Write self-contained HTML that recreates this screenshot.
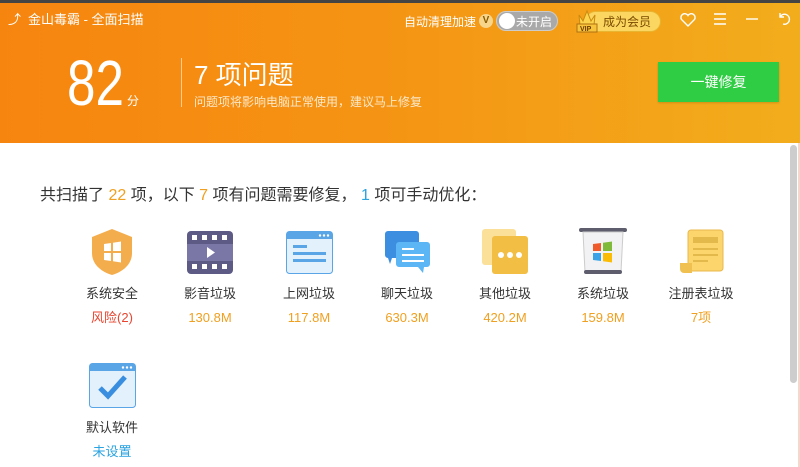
<!DOCTYPE html>
<html><head><meta charset="utf-8"><style>
*{margin:0;padding:0;box-sizing:border-box}
body{width:800px;height:467px;overflow:hidden;background:#fff;font-family:"Liberation Sans","Noto Sans CJK SC",sans-serif;position:relative}
.top{position:absolute;left:0;top:0;width:800px;height:143px;background:linear-gradient(90deg,#f6850f 0%,#f59514 50%,#f2ad1c 100%)}
.strip{position:absolute;left:0;top:0;width:800px;height:3px;background:#444}
.t{position:absolute;color:#fff;white-space:nowrap}
.item{position:absolute;width:100px;text-align:center}
.item svg{display:block;margin:0 auto}
.lbl{font-size:13px;color:#333;margin-top:8px;line-height:18px}
.val{font-size:13px;color:#f0a020;margin-top:6px;line-height:18px}
</style></head><body>
<div class="top"></div><div class="strip"></div>
<div class="t" style="left:8px;top:9px;font-size:13px;">&#x2934;&#xFE0E;</div>
<div class="t" style="left:28px;top:9px;font-size:13px">金山毒霸 - 全面扫描</div>
<div class="t" style="left:404px;top:13px;font-size:12px">自动清理加速</div>
<div style="position:absolute;left:479px;top:14px;width:14px;height:14px;border-radius:7px;background:#f7d58a;color:#8a5a00;font-size:10px;font-weight:bold;text-align:center;line-height:14px">V</div>
<div style="position:absolute;left:496px;top:11px;width:62px;height:20px;border-radius:10px;background:#a9a9a9;border:1px solid #ccc"></div>
<div style="position:absolute;left:499px;top:13px;width:16px;height:16px;border-radius:8px;background:#fff"></div>
<div class="t" style="left:516px;top:13px;font-size:12px">未开启</div>
<div style="position:absolute;left:585px;top:11px;width:76px;height:21px;border-radius:11px;background:#fbd660;border:1px solid #e8b530"></div>
<svg style="position:absolute;left:573px;top:5px" width="28" height="28"><path d="M6 10 L10 16 L14 6 L18 16 L22 10 L21 20 L7 20Z" fill="#fcd34d" stroke="#c98a10"/><rect x="4" y="19" width="20" height="8" fill="#f7c33a" stroke="#b07010"/><text x="7" y="26" font-size="7" font-weight="bold" fill="#6b3b00" font-family="Liberation Sans">VIP</text></svg>
<div class="t" style="left:603px;top:13px;font-size:12px;color:#7a4a00">成为会员</div>
<svg style="position:absolute;left:679px;top:11px" width="18" height="18"><path d="M9 15 L2.5 8.5 A3.5 3.5 0 0 1 9 4.5 A3.5 3.5 0 0 1 15.5 8.5Z" fill="none" stroke="#fff" stroke-width="1.4"/></svg>
<svg style="position:absolute;left:712px;top:11px" width="16" height="16"><path d="M2 3h12M2 8h12M2 13h12" stroke="#fff" stroke-width="1.4"/></svg>
<svg style="position:absolute;left:744px;top:11px" width="16" height="16"><path d="M2 8h12" stroke="#fff" stroke-width="1.4"/></svg>
<svg style="position:absolute;left:776px;top:10px" width="16" height="16"><path d="M4 3v4h4 M4 7 A5 5 0 1 1 7 14" fill="none" stroke="#fff" stroke-width="1.4"/></svg>
<div class="t" style="left:67px;top:48px;font-size:64px;line-height:70px;font-weight:300;transform:scaleX(.8);transform-origin:left">82</div>
<div class="t" style="left:127px;top:92px;font-size:12px">分</div>
<div style="position:absolute;left:181px;top:58px;width:1px;height:49px;background:rgba(255,255,255,.55)"></div>
<div class="t" style="left:194px;top:55px;font-size:26px">7 项问题</div>
<div class="t" style="left:194px;top:93px;font-size:12px;color:#fde8c8">问题项将影响电脑正常使用，建议马上修复</div>
<div style="position:absolute;left:658px;top:62px;width:121px;height:40px;background:#2fcd44;color:#fff;font-size:14px;text-align:center;line-height:40px;box-shadow:0 1px 2px rgba(0,0,0,.15)">一键修复</div>
<div style="position:absolute;left:790px;top:145px;width:7px;height:238px;border-radius:4px;background:#cdcdcd"></div>
<div style="position:absolute;left:798px;top:143px;width:2px;height:324px;background:#f3d8cc"></div>
<div style="position:absolute;left:40px;top:181px;font-size:16px;color:#333;white-space:nowrap">共扫描了 <span style="color:#f0a020">22</span> 项，以下 <span style="color:#f0a020">7</span> 项有问题需要修复， <span style="color:#2aa3e0">1</span> 项可手动优化：</div>

<div class="item" style="left:62px;top:227px">
<svg width="50" height="50"><path d="M25 2 L45 10 V26 C45 38 35 45 25 48 C15 45 5 38 5 26 V10Z" fill="#f4ad4c"/><path d="M17 17 L24 16 V24 H17Z M26 15.7 L34 14.5 V24 H26Z M17 26 H24 V34 L17 33Z M26 26 H34 V35.5 L26 34.3Z" fill="#fff"/></svg>
<div class="lbl">系统安全</div><div class="val" style="color:#e8452f">风险(2)</div></div>

<div class="item" style="left:160px;top:227px">
<svg width="50" height="50"><rect x="2" y="4" width="46" height="43" rx="4" fill="#5d5a85"/><rect x="2" y="17" width="46" height="17" fill="#7a77a6"/><g fill="#fff"><rect x="7" y="8" width="5" height="5"/><rect x="17" y="8" width="5" height="5"/><rect x="27" y="8" width="5" height="5"/><rect x="37" y="8" width="5" height="5"/><rect x="7" y="37" width="5" height="5"/><rect x="17" y="37" width="5" height="5"/><rect x="27" y="37" width="5" height="5"/><rect x="37" y="37" width="5" height="5"/><path d="M22 20 L30 25.5 L22 31Z"/></g></svg>
<div class="lbl">影音垃圾</div><div class="val">130.8M</div></div>

<div class="item" style="left:259px;top:227px">
<svg width="50" height="50"><rect x="2.5" y="4.5" width="46" height="42" rx="3" fill="#e3f1fd" stroke="#5aa5e6"/><rect x="3" y="5" width="45" height="7" fill="#5aa5e6"/><g fill="#fff"><circle cx="36" cy="8.5" r="1.2"/><circle cx="40" cy="8.5" r="1.2"/><circle cx="44" cy="8.5" r="1.2"/></g><g fill="#5aa5e6"><rect x="9" y="18" width="14" height="3"/><rect x="9" y="25" width="33" height="3"/><rect x="9" y="32" width="33" height="3"/></g></svg>
<div class="lbl">上网垃圾</div><div class="val">117.8M</div></div>

<div class="item" style="left:357px;top:227px">
<svg width="50" height="50"><path d="M6 4 H34 A3 3 0 0 1 37 7 V28 A3 3 0 0 1 34 31 H10 L8 37 L6 31 A3 3 0 0 1 3 28 V7 A3 3 0 0 1 6 4Z" fill="#3c8fe0"/><path d="M17 15 H45 A3 3 0 0 1 48 18 V37 A3 3 0 0 1 45 40 H42 L41 46 L36 40 H17 A3 3 0 0 1 14 37 V18 A3 3 0 0 1 17 15Z" fill="#5cb5f4"/><g fill="#fff"><rect x="20" y="21" width="12" height="2"/><rect x="20" y="27" width="22" height="2"/><rect x="20" y="33" width="22" height="2"/></g></svg>
<div class="lbl">聊天垃圾</div><div class="val">630.3M</div></div>

<div class="item" style="left:455px;top:227px">
<svg width="50" height="50"><rect x="2" y="2" width="34" height="36" rx="3" fill="#fbe09a"/><rect x="12" y="9" width="36" height="38" rx="3" fill="#f2be43"/><g fill="#fff"><circle cx="21" cy="28" r="3"/><circle cx="30" cy="28" r="3"/><circle cx="39" cy="28" r="3"/></g></svg>
<div class="lbl">其他垃圾</div><div class="val">420.2M</div></div>

<div class="item" style="left:553px;top:227px">
<svg width="50" height="50"><rect x="1" y="1" width="48" height="4" rx="2" fill="#5d5d6e"/><path d="M5 5 H45 L43 45 H7Z" fill="#f2f2f4" stroke="#ccc"/><rect x="6" y="43" width="38" height="4" rx="2" fill="#5d5d6e"/><path d="M15 17 L23 16 V24 H15Z" fill="#f05a2a"/><path d="M25 15.7 L34 14.5 V24 H25Z" fill="#7fba3a"/><path d="M15 26 H23 V34 L15 33Z" fill="#3aa3e8"/><path d="M25 26 H34 V35.5 L25 34.3Z" fill="#fbbc05"/></svg>
<div class="lbl">系统垃圾</div><div class="val">159.8M</div></div>

<div class="item" style="left:651px;top:227px">
<svg width="50" height="50"><rect x="12" y="3" width="35" height="41" rx="3" fill="#fcd56d" stroke="#e8b84a"/><path d="M4 36 H16 V46 H8 A4 4 0 0 1 4 42Z" fill="#f0c050"/><rect x="17" y="10" width="25" height="6" fill="#e2b94a"/><rect x="17" y="21" width="25" height="2" fill="#e2b94a"/><rect x="17" y="27" width="25" height="2" fill="#e2b94a"/><rect x="17" y="33" width="15" height="2" fill="#e2b94a"/></svg>
<div class="lbl">注册表垃圾</div><div class="val">7项</div></div>

<div class="item" style="left:62px;top:361px">
<svg width="50" height="50"><rect x="2.5" y="2.5" width="46" height="44" rx="3" fill="#e3f1fd" stroke="#5aa5e6"/><rect x="3" y="3" width="45" height="7" fill="#5aa5e6"/><g fill="#fff"><circle cx="36" cy="6.5" r="1.2"/><circle cx="40" cy="6.5" r="1.2"/><circle cx="44" cy="6.5" r="1.2"/></g><path d="M13 27 L21 35 L38 16" fill="none" stroke="#3a8ee0" stroke-width="5"/></svg>
<div class="lbl">默认软件</div><div class="val" style="color:#2aa3e0">未设置</div></div>
</body></html>
